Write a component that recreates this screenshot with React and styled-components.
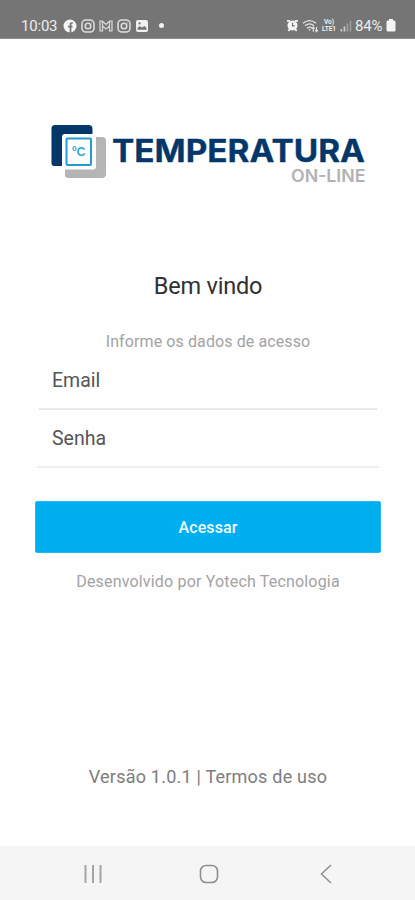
import React from "react";
import styled, { createGlobalStyle } from "styled-components";

const GlobalStyle = createGlobalStyle`
  * {
    box-sizing: border-box;
  }
  body {
    margin: 0;
    background-color: #fefefe;
    font-family: Roboto, "Liberation Sans", sans-serif;
  }
`;

const Container = styled.div`
  height: 900px;
  width: 415px;
  display: flex;
  flex-direction: column;
  background-color: #fefefe;
  overflow: hidden;
`;

const StatusBar = styled.header`
  height: 39px;
  flex-shrink: 0;
  padding: 12px 19px 0 21px;
  display: flex;
  justify-content: space-between;
  background-color: #757575;
  border-bottom: 1px solid #8d8d8d;
  color: #ededed;
`;

const StatusGroup = styled.div`
  height: 27px;
  display: flex;
  align-items: center;
  gap: ${(props) => props.$gap}px;
  svg {
    display: block;
    flex-shrink: 0;
  }
`;

const StatusText = styled.span`
  width: ${(props) => props.$width}px;
  font-size: 15px;
  line-height: 20px;
  letter-spacing: ${(props) => props.$spacing || 0}px;
  white-space: nowrap;
`;

const Network = styled.span`
  width: 16px;
  margin-left: -2px;
  display: flex;
  flex-direction: column;
  font-size: 6.5px;
  font-weight: 700;
  line-height: 7px;
  text-align: center;
  letter-spacing: -0.1px;
`;

const Dot = styled.span`
  width: 5px;
  height: 5px;
  margin-left: 6px;
  border-radius: 50%;
  background-color: #f1f1f1;
`;

const Content = styled.main`
  flex: 1;
  padding: 80px 34px 0 35px;
  display: flex;
  flex-direction: column;
`;

const LogoBox = styled.div`
  height: 70px;
  margin-left: 10px;
  svg {
    display: block;
  }
`;

const Title = styled.h1`
  margin: 80px 0 0;
  font-size: 23.5px;
  font-weight: 400;
  line-height: 34px;
  letter-spacing: -0.2px;
  text-align: center;
  color: #303030;
`;

const Hint = styled.p`
  margin: ${(props) => props.$top}px 0 0;
  font-size: 16px;
  line-height: 20px;
  letter-spacing: ${(props) => props.$spacing}px;
  text-align: center;
  color: #a3a3a3;
`;

const Field = styled.input`
  height: 58px;
  width: ${(props) => props.$width}px;
  margin: 0 auto;
  padding: 0 ${(props) => props.$inset}px;
  border: 0;
  border-bottom: 2px solid ${(props) => props.$line};
  outline: none;
  background: transparent;
  font-family: inherit;
  font-size: 19.5px;
  color: #555555;
  &::placeholder {
    color: #555555;
    opacity: 1;
  }
`;

const Button = styled.button`
  height: 52px;
  margin-top: 33px;
  border: 1px solid #25b9f3;
  border-radius: 2px;
  background-color: #00aff0;
  color: #f3fcff;
  font-family: inherit;
  font-size: 16px;
  font-weight: 500;
  letter-spacing: 0.1px;
  cursor: pointer;
`;

const Version = styled.p`
  margin: 173px 0 0;
  font-size: 18px;
  line-height: 24px;
  letter-spacing: 0.22px;
  text-align: center;
  color: #7d7d7d;
`;

const NavBar = styled.nav`
  height: 54px;
  flex-shrink: 0;
  padding: 1px 78px 0 81px;
  display: grid;
  grid-template-columns: 118px 1fr auto;
  align-items: center;
  background-color: #f5f5f5;
`;

const NavButton = styled.button`
  justify-self: start;
  padding: 0;
  border: 0;
  background: none;
  svg {
    display: block;
  }
`;

const FacebookIcon = () => (
  <svg width="14" height="14" viewBox="0 0 14 14">
    <circle cx="7" cy="7" r="6.5" fill="#f5f5f5" />
    <path d="M7.5 14V5.5Q7.5 3.8 9.8 4M5 7.7h4.5" fill="none" stroke="#757575" strokeWidth="1.7" />
  </svg>
);

const InstagramIcon = () => (
  <svg width="14" height="14" viewBox="0 0 14 14" fill="none" stroke="#dedede" strokeWidth="1.5">
    <rect x="1" y="1" width="12" height="12" rx="3.8" />
    <circle cx="7" cy="7" r="2.8" />
    <circle cx="10.4" cy="3.7" r=".5" fill="#e6e6e6" stroke="none" />
  </svg>
);

const MailIcon = () => (
  <svg width="14" height="14" viewBox="0 0 14 14" fill="none" stroke="#d4d4d4" strokeWidth="1.3">
    <path d="M1 2.2h2.5L7 5.4l3.5-3.2H13v9.6h-2.5V7L7 10 3.5 7v4.8H1zM3.5 2.2V7M10.5 2.2V7" />
  </svg>
);

const PictureIcon = () => (
  <svg width="14" height="14" viewBox="0 0 14 14">
    <rect x="1" y="1" width="12" height="12" rx="2" fill="#f0f0f0" />
    <path d="M2.5 10.8V9l2.3-2 2 1.6L9.5 7l2 2v1.8z" fill="#757575" />
    <circle cx="4.6" cy="4.4" r="1.1" fill="#757575" />
  </svg>
);

const AlarmIcon = () => (
  <svg width="13" height="13" viewBox="0 0 13 13">
    <path d="M1 1.9h3M9 1.9h3M2.2 11.8l1.9-1.6M10.8 11.8l-1.9-1.6" stroke="#f1f1f1" strokeWidth="1.8" />
    <circle cx="6.5" cy="6.5" r="5" fill="#f5f5f5" />
    <path d="M6.5 3.8v3h2.2" fill="none" stroke="#757575" strokeWidth="1.2" />
  </svg>
);

const WifiIcon = () => (
  <svg width="18" height="14" viewBox="0 0 18 14" fill="none" stroke="#e4e4e4" strokeWidth="1.3">
    <path d="M1 4.3Q7.5-1 14 4.3M3 6.8Q7.5 3 12 6.8M5 9.2Q7.5 7 10 9.2" />
    <path d="M6.3 10.3h2.4L7.5 12z" fill="#e4e4e4" stroke="none" />
    <path d="M11.3 12.8V8M10 9.8 11.3 8l1.3 1.8M14.5 8v4.8M13.2 11l1.3 1.8 1.3-1.8" strokeWidth="1.1" />
  </svg>
);

const SignalIcon = () => (
  <svg width="12" height="12" viewBox="0 0 12 12">
    <path d="M.5 9h1.8v2.5H.5zM3.6 6.5h1.8v5H3.6z" fill="#c9c9c9" />
    <path d="M6.7 3.5h1.6v8H6.7zM9.8.8h1.4v10.7H9.8z" fill="#a0a0a0" />
  </svg>
);

const BatteryIcon = () => (
  <svg width="10" height="13" viewBox="0 0 10 13" fill="#f5f5f5">
    <rect x="3" y="0" width="4" height="3" />
    <rect x=".5" y="1.6" width="9" height="11" rx="1.5" />
  </svg>
);

const Logo = () => (
  <svg width="325" height="70" viewBox="0 0 325 70">
    <path d="M23 18h34q4 0 4 4v33q0 4-4 4H23q-3 0-3-3V18z" fill="#b5b5b6" />
    <path d="M10 6h33.5q4 0 4 4v37H9q-2.5 0-2.5-3V9.5Q6.5 6 10 6z" fill="#03376a" />
    <rect x="17" y="15" width="34" height="35.5" rx="3" fill="#fefefe" />
    <rect x="21.5" y="19.5" width="24.5" height="26.5" rx="1" fill="#fdfefe" stroke="#249bd0" strokeWidth="2" />
    <text x="27" y="37" fontFamily="Liberation Sans, sans-serif" fontSize="12" fontWeight="700" textLength="13.5" lengthAdjust="spacingAndGlyphs" fill="#3ba7d6">ºC</text>
    <text x="67" y="43" fontFamily="Inter, sans-serif" fontSize="31" fontWeight="700" textLength="253" lengthAdjust="spacingAndGlyphs" fill="#03376a" stroke="#03376a" strokeWidth=".3">TEMPERATURA</text>
    <text x="246" y="62.5" fontFamily="Inter, sans-serif" fontSize="17.5" fontWeight="600" textLength="74.5" lengthAdjust="spacingAndGlyphs" fill="#b2b2b3">ON-LINE</text>
  </svg>
);

const App = () => {
  return (
    <Container>
      <GlobalStyle />
      <StatusBar>
        <StatusGroup $gap={4}>
          <StatusText $width={38} $spacing={-0.2}>10:03</StatusText>
          <FacebookIcon />
          <InstagramIcon />
          <MailIcon />
          <InstagramIcon />
          <PictureIcon />
          <Dot />
        </StatusGroup>
        <StatusGroup $gap={3}>
          <AlarmIcon />
          <WifiIcon />
          <Network>
            <span>Vo)</span>
            <span>LTE1</span>
          </Network>
          <SignalIcon />
          <StatusText $width={28} $spacing={-0.2}>84%</StatusText>
          <BatteryIcon />
        </StatusGroup>
      </StatusBar>
      <Content>
        <LogoBox>
          <Logo />
        </LogoBox>
        <Title>Bem vindo</Title>
        <Hint $top={29} $spacing={0.1}>Informe os dados de acesso</Hint>
        <Field type="email" placeholder="Email" $width={338} $inset={13} $line="#e8e8e8" />
        <Field type="password" placeholder="Senha" $width={342} $inset={15} $line="#eeeeee" />
        <Button>Acessar</Button>
        <Hint $top={19} $spacing={0.18}>Desenvolvido por Yotech Tecnologia</Hint>
        <Version>Versão 1.0.1 | Termos de uso</Version>
      </Content>
      <NavBar>
        <NavButton aria-label="Recentes">
          <svg width="24" height="20" viewBox="0 0 24 20" stroke="#a5a5a5" strokeWidth="2">
            <path d="M4.5 1v18M12 1v18M19.5 1v18" />
          </svg>
        </NavButton>
        <NavButton aria-label="Início">
          <svg width="20" height="20" viewBox="0 0 20 20" fill="none" stroke="#8f8f8f" strokeWidth="1.6">
            <rect x="1.5" y="1.5" width="17" height="17" rx="5.5" />
          </svg>
        </NavButton>
        <NavButton aria-label="Voltar">
          <svg width="20" height="20" viewBox="0 0 20 20" fill="none" stroke="#929292" strokeWidth="1.6">
            <path d="M14 1 4.5 10 14 19" />
          </svg>
        </NavButton>
      </NavBar>
    </Container>
  );
};

export default App;
